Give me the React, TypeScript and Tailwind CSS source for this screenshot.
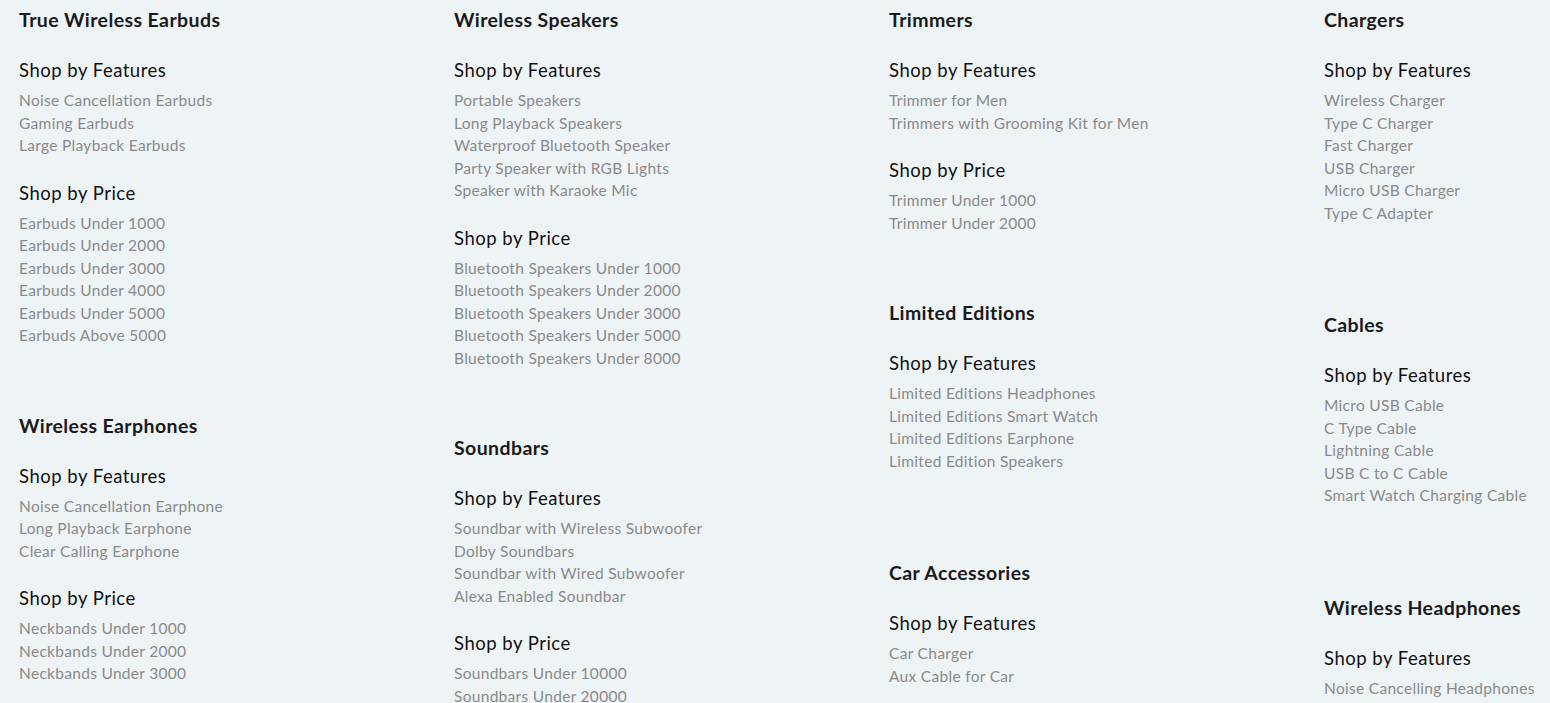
import React from 'react'

type Group = { title: string; links: string[] }
type Section = { name: string; groups: Group[] }

const columns: Section[][] = [
  [
    {
      name: 'True Wireless Earbuds',
      groups: [
        { title: 'Shop by Features', links: ['Noise Cancellation Earbuds', 'Gaming Earbuds', 'Large Playback Earbuds'] },
        {
          title: 'Shop by Price',
          links: ['Earbuds Under 1000', 'Earbuds Under 2000', 'Earbuds Under 3000', 'Earbuds Under 4000', 'Earbuds Under 5000', 'Earbuds Above 5000'],
        },
      ],
    },
    {
      name: 'Wireless Earphones',
      groups: [
        { title: 'Shop by Features', links: ['Noise Cancellation Earphone', 'Long Playback Earphone', 'Clear Calling Earphone'] },
        { title: 'Shop by Price', links: ['Neckbands Under 1000', 'Neckbands Under 2000', 'Neckbands Under 3000'] },
      ],
    },
  ],
  [
    {
      name: 'Wireless Speakers',
      groups: [
        {
          title: 'Shop by Features',
          links: ['Portable Speakers', 'Long Playback Speakers', 'Waterproof Bluetooth Speaker', 'Party Speaker with RGB Lights', 'Speaker with Karaoke Mic'],
        },
        {
          title: 'Shop by Price',
          links: [
            'Bluetooth Speakers Under 1000',
            'Bluetooth Speakers Under 2000',
            'Bluetooth Speakers Under 3000',
            'Bluetooth Speakers Under 5000',
            'Bluetooth Speakers Under 8000',
          ],
        },
      ],
    },
    {
      name: 'Soundbars',
      groups: [
        {
          title: 'Shop by Features',
          links: ['Soundbar with Wireless Subwoofer', 'Dolby Soundbars', 'Soundbar with Wired Subwoofer', 'Alexa Enabled Soundbar'],
        },
        { title: 'Shop by Price', links: ['Soundbars Under 10000', 'Soundbars Under 20000'] },
      ],
    },
  ],
  [
    {
      name: 'Trimmers',
      groups: [
        { title: 'Shop by Features', links: ['Trimmer for Men', 'Trimmers with Grooming Kit for Men'] },
        { title: 'Shop by Price', links: ['Trimmer Under 1000', 'Trimmer Under 2000'] },
      ],
    },
    {
      name: 'Limited Editions',
      groups: [
        {
          title: 'Shop by Features',
          links: ['Limited Editions Headphones', 'Limited Editions Smart Watch', 'Limited Editions Earphone', 'Limited Edition Speakers'],
        },
      ],
    },
    {
      name: 'Car Accessories',
      groups: [{ title: 'Shop by Features', links: ['Car Charger', 'Aux Cable for Car'] }],
    },
  ],
  [
    {
      name: 'Chargers',
      groups: [
        {
          title: 'Shop by Features',
          links: ['Wireless Charger', 'Type C Charger', 'Fast Charger', 'USB Charger', 'Micro USB Charger', 'Type C Adapter'],
        },
      ],
    },
    {
      name: 'Cables',
      groups: [
        {
          title: 'Shop by Features',
          links: ['Micro USB Cable', 'C Type Cable', 'Lightning Cable', 'USB C to C Cable', 'Smart Watch Charging Cable'],
        },
      ],
    },
    {
      name: 'Wireless Headphones',
      groups: [{ title: 'Shop by Features', links: ['Noise Cancelling Headphones'] }],
    },
  ],
]

const CategoryBlock = ({ section }: { section: Section }) => {
  const single = section.groups.length === 1
  return (
    <div className={single ? 'mb-[89px]' : 'mb-[67px]'}>
      <h3 className="text-[19.5px] font-bold leading-6 tracking-[0.4px] text-[#1a1a1a]">{section.name}</h3>
      {section.groups.map((g, i) => (
        <div key={g.title} className={i === 0 ? 'mt-[26px]' : 'mt-6'}>
          <h4 className="text-[18.5px] leading-6 tracking-[0.5px] text-[#111111]">{g.title}</h4>
          <ul className="mt-[7px]">
            {g.links.map((l) => (
              <li key={l} className="text-[15.5px] leading-[22.5px] tracking-[0.3px] text-[#8a8a8a]">
                {l}
              </li>
            ))}
          </ul>
        </div>
      ))}
    </div>
  )
}

export default function App() {
  return (
    <div className="min-h-screen bg-[#eef3f6] font-['Lato',sans-serif]">
      <div className="flex pl-[19px] pt-2">
        {columns.map((col, i) => (
          <div key={i} className="w-[435px] shrink-0">
            {col.map((s) => (
              <CategoryBlock key={s.name} section={s} />
            ))}
          </div>
        ))}
      </div>
    </div>
  )
}
